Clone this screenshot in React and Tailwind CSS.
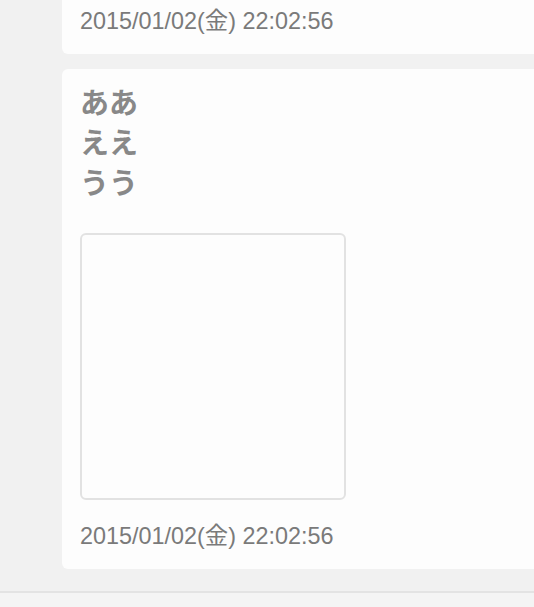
const posts = [
  { id: 1, date: '2015/01/02(金) 22:02:56', cut: true },
  { id: 2, lines: ['ああ', 'ええ', 'うう'], image: true, date: '2015/01/02(金) 22:02:56' },
]

function PostDate({ children }) {
  return (
    <p className="text-[23.4px] leading-[30px] text-[#7a7a7a] font-['Liberation_Sans','Noto_Sans_CJK_JP',sans-serif]">
      {children}
    </p>
  )
}

export default function App() {
  return (
    <div className="w-[534px] h-[607px] overflow-hidden bg-[#f1f1f1] flex flex-col">
      <div className="flex flex-col gap-[15px] pl-[62px]">
        {posts.map((post) => (
          <div
            key={post.id}
            className={`bg-[#fdfdfd] rounded-l-[6px] px-[18px] pb-[18px] ${post.cut ? 'pt-[6px] rounded-tl-none' : 'pt-[12px]'}`}
          >
            {post.lines && (
              <div className="text-[29px] leading-[40px] font-bold text-[#888888] font-['Noto_Sans_CJK_JP',sans-serif]">
                {post.lines.map((l) => (
                  <p key={l}>{l}</p>
                ))}
              </div>
            )}
            {post.image && (
              <div className="mt-[32px] w-[266px] h-[267px] border-2 border-[#e2e2e2] rounded-[6px] bg-[#fdfdfd]" />
            )}
            <div className={post.image ? 'mt-[21px]' : ''}>
              <PostDate>{post.date}</PostDate>
            </div>
          </div>
        ))}
      </div>
      <div className="mt-[22px] h-[2px] bg-[#e3e3e3]" />
      <div className="flex-1 bg-[#f4f4f4]" />
    </div>
  )
}
